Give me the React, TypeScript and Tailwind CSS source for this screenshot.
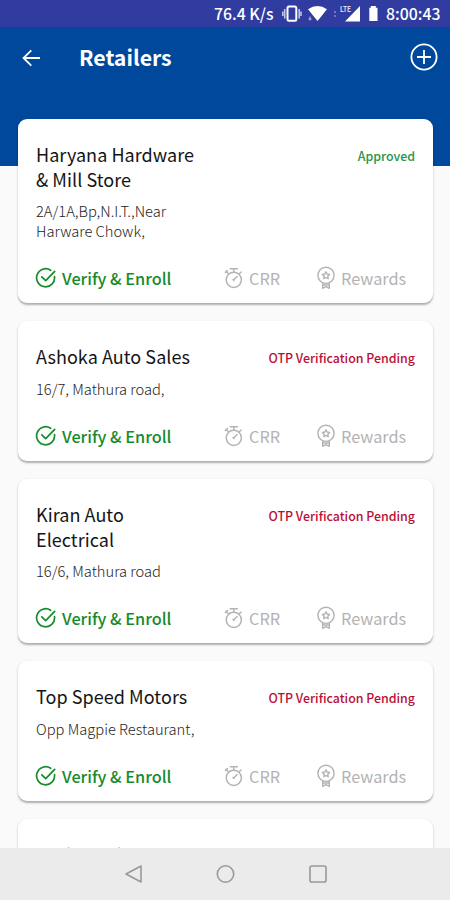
import React from 'react';

type Retailer = { name: string[]; address: string[]; status: string; approved?: boolean };

const retailers: Retailer[] = [
  { name: ['Haryana Hardware', '& Mill Store'], address: ['2A/1A,Bp,N.I.T.,Near', 'Harware Chowk,'], status: 'Approved', approved: true },
  { name: ['Ashoka Auto Sales'], address: ['16/7, Mathura road,'], status: 'OTP Verification Pending' },
  { name: ['Kiran Auto', 'Electrical'], address: ['16/6, Mathura road'], status: 'OTP Verification Pending' },
  { name: ['Top Speed Motors'], address: ['Opp Magpie Restaurant,'], status: 'OTP Verification Pending' },
];

const VerifyIcon = () => (
  <svg className="-ml-px h-[22px] w-[22px] shrink-0" viewBox="0 0 22 22" fill="none" stroke="currentColor" strokeWidth="1.7" strokeLinecap="round" strokeLinejoin="round">
    <path d="M15.6 3.3A9 9 0 1 0 19.5 9.6" />
    <path d="M6.8 9.9l3.9 3.8 9-9.4" />
  </svg>
);

const TimerIcon = () => (
  <svg className="h-[22px] w-[20px] shrink-0" viewBox="0 0 20 22" fill="none" stroke="currentColor" strokeWidth="1.45" strokeLinecap="round" strokeLinejoin="round">
    <circle cx="9.8" cy="12.8" r="7.6" />
    <path d="M6.2 1.7h7.2M9.8 1.7V5M2 4.3l2.3 2.2M1.4 5.5l2-2M15.3 6.8l1.8-1.8M9.6 13l3.5-3.4M9 12.6l1 1" />
  </svg>
);

const RewardIcon = () => (
  <svg className="h-[24px] w-[20px] shrink-0" viewBox="0 0 20 24" fill="none" stroke="currentColor" strokeWidth="1.4" strokeLinejoin="round">
    <circle cx="10" cy="9.3" r="8.1" />
    <path d="M10 5.8l1.1 2.2 2.5.4-1.8 1.8.4 2.5-2.2-1.2-2.2 1.2.4-2.5-1.8-1.8 2.5-.4z" />
    <path d="M6.7 16.8v5.5l3.3-1.7 3.3 1.7v-5.5M6.7 19h6.6" />
  </svg>
);

const StatusBar = () => (
  <header className="flex h-[27px] shrink-0 items-center bg-[#303c9f] pl-[214px] text-white">
    <span className="w-[60px] whitespace-nowrap text-[15.8px] font-medium leading-[26px]">76.4 K/s</span>
    <svg className="ml-[8px] h-[27px] w-[102px] shrink-0" viewBox="282 0 102 27" fill="currentColor">
      <rect x="287.5" y="6.6" width="8.8" height="14.2" rx="1.5" fill="none" stroke="currentColor" strokeWidth="2" />
      <path d="M284.7 9v9.5M299.2 9v9.5M282.8 11.5v4.5M301 11.5v4.5" stroke="currentColor" strokeWidth="1.6" opacity=".7" />
      <path d="M308 9.3q9.5-6.5 19 0L317.5 21z" />
      <path d="M310 16.5v4M308.5 19h3" stroke="currentColor" opacity=".7" />
      <path d="M335 11v2M335 15v2" stroke="currentColor" strokeWidth="1.4" opacity=".45" />
      <path d="M360 6v15.5h-15z" />
      <text x="340" y="12" fontSize="7.5" fontWeight="700" textLength="11" lengthAdjust="spacingAndGlyphs" opacity=".8">LTE</text>
      <path d="M369.3 7.8h1.5V6h5v1.8h1.7V21h-8.2z" />
    </svg>
    <span className="ml-[2px] whitespace-nowrap text-[15.8px] font-medium leading-[26px]">8:00:43</span>
  </header>
);

const Title = ({ lines }: { lines: string[] }) => (
  <h2 className="text-[18px] leading-[25px] tracking-[0.05px] text-[#151515]">
    {lines.map((line) => <span key={line} className="block whitespace-nowrap">{line}</span>)}
  </h2>
);

const cardStyle = 'shrink-0 rounded-[9px] bg-white px-[18px] pt-[22.5px] shadow-[0_1.5px_2px_rgba(0,0,0,0.3)]';

const RetailerCard = ({ name, address, status, approved }: Retailer) => (
  <article className={cardStyle + ' pb-[13px]'}>
    <div className="flex items-start justify-between">
      <Title lines={name} />
      <span className={'mt-px whitespace-nowrap text-[12.4px] font-medium leading-[24px] pt-[1px] ' + (approved ? 'text-[#27954a]' : 'text-[#b90f36]')}>{status}</span>
    </div>
    <p className="mt-[9px] text-[14.7px] font-light leading-5 text-[#252525]">
      {address.map((line) => <span key={line} className="block whitespace-nowrap">{line}</span>)}
    </p>
    <div className="mt-[25.5px] flex h-6 items-center text-[16.3px] leading-6 text-[#b3b3b3]">
      <div className="flex w-[188px] items-center gap-[5px] font-medium text-[#168b2c]">
        <VerifyIcon /><span className="-mt-px">Verify &amp; Enroll</span>
      </div>
      <div className="flex w-[92px] items-center gap-[5px]"><TimerIcon /><span className="-mt-px">CRR</span></div>
      <div className="flex items-center gap-[5px]"><RewardIcon /><span className="-mt-px">Rewards</span></div>
    </div>
  </article>
);

export default function App() {
  return (
    <div className="flex h-[900px] w-[450px] flex-col overflow-hidden bg-[#fafafa] font-['Noto_Sans_CJK_SC',sans-serif]">
      <StatusBar />
      <main className="min-h-0 flex-1 overflow-hidden bg-[linear-gradient(#00489b_139px,#fafafa_139px)]">
        <div className="flex h-[92px] items-start justify-between pl-[22px] pr-[12px] pt-[16px] text-white">
          <div className="flex items-center">
            <svg className="h-[30px] w-[20px]" viewBox="0 0 20 30" fill="none" stroke="currentColor" strokeWidth="1.8">
              <path d="M18 15H1.8M9.3 7.3L1.5 15l7.8 7.7" />
            </svg>
            <h1 className="-mt-[3px] ml-[37px] text-[21.3px] font-bold leading-[30px]">Retailers</h1>
          </div>
          <svg className="h-[28px] w-[28px]" viewBox="0 0 28 28" fill="none" stroke="currentColor" strokeWidth="1.8">
            <circle cx="14" cy="14" r="12.6" /><path d="M14 7v14M7 14h14" />
          </svg>
        </div>
        <div className="flex flex-col gap-[18px] pl-[18px] pr-[17px]">
          {retailers.map((r) => <RetailerCard key={r.name[0]} {...r} />)}
          <article className={cardStyle}><Title lines={['Rashneesh Motors']} /></article>
        </div>
      </main>
      <nav className="flex h-[52px] shrink-0 items-center bg-[#ebebeb] pl-[124px] text-[#999]">
        <svg className="h-[20px] w-[204px]" viewBox="124 0 204 20" fill="none" stroke="currentColor" strokeWidth="1.6" strokeLinejoin="round">
          <path d="M141 2v16l-15-8z" /><circle cx="225.5" cy="10" r="8.2" /><rect x="310" y="2" width="16" height="16" rx="1.8" />
        </svg>
      </nav>
    </div>
  );
}
